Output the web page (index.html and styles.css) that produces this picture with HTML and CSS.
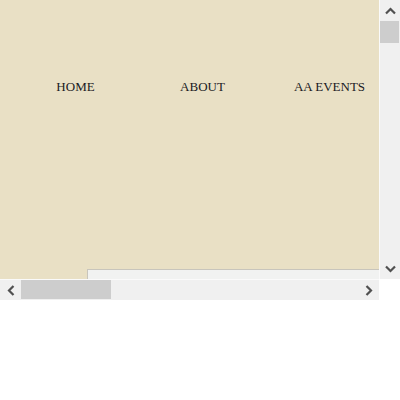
FILE: index.html
```html
<!DOCTYPE html>
<html>
<head>
<meta charset="utf-8">
<link rel="stylesheet" href="styles.css">
</head>
<body>
<div class="frame">
  <div class="viewport">
    <div class="page">
      <header class="header">
        <nav class="nav">
          <a class="nav-item">HOME</a>
          <a class="nav-item">ABOUT</a>
          <a class="nav-item">AA EVENTS</a>
        </nav>
      </header>
      <div class="body-row">
        <div class="side"></div>
        <main class="main"></main>
      </div>
    </div>
  </div>
  <div class="vbar">
    <div class="btn">
      <svg width="11" height="8" viewBox="0 0 11 8"><path d="M1 6.5 L5.5 2 L10 6.5" fill="none" stroke="#505050" stroke-width="2.2"/></svg>
    </div>
    <div class="vthumb"></div>
    <div class="spacer"></div>
    <div class="btn">
      <svg width="11" height="8" viewBox="0 0 11 8"><path d="M1 1.5 L5.5 6 L10 1.5" fill="none" stroke="#505050" stroke-width="2.2"/></svg>
    </div>
  </div>
  <div class="hbar">
    <div class="btn">
      <svg width="8" height="11" viewBox="0 0 8 11"><path d="M6.5 1 L2 5.5 L6.5 10" fill="none" stroke="#505050" stroke-width="2.2"/></svg>
    </div>
    <div class="hthumb"></div>
    <div class="spacer"></div>
    <div class="btn">
      <svg width="8" height="11" viewBox="0 0 8 11"><path d="M1.5 1 L6 5.5 L1.5 10" fill="none" stroke="#505050" stroke-width="2.2"/></svg>
    </div>
  </div>
  <div class="corner"></div>
</div>
</body>
</html>
```

FILE: styles.css
```css
html, body {
  margin: 0;
  padding: 0;
  background: #ffffff;
}
.frame {
  width: 400px;
  height: 300px;
  display: grid;
  grid-template-columns: 379px 21px;
  grid-template-rows: 279px 21px;
}
.viewport {
  overflow: hidden;
  background: #e9e0c5;
}
.page {
  width: 1420px;
  background: #e9e0c5;
  font-family: "Liberation Serif", serif;
}
.header {
  height: 269px;
  padding-top: 79px;
  box-sizing: border-box;
}
.nav {
  display: flex;
  padding-left: 12px;
}
.nav-item {
  width: 127px;
  text-align: center;
  font-size: 13px;
  color: #1a1a24;
}
.body-row {
  display: flex;
}
.side {
  width: 87px;
  flex: none;
}
.main {
  flex: 1;
  height: 600px;
  background: #f1f2f1;
  border-top: 1px solid #c8c5bc;
  border-left: 1px solid #c8c5bc;
}
.vbar {
  display: flex;
  flex-direction: column;
  background: #f0f0f0;
  border-left: 1px solid #fafafa;
}
.hbar {
  display: flex;
  background: #f0f0f0;
  border-top: 1px solid #fafafa;
}
.btn {
  flex: none;
  display: flex;
  align-items: center;
  justify-content: center;
}
.vbar .btn {
  height: 21px;
}
.hbar .btn {
  width: 21px;
}
.vthumb {
  height: 22px;
  background: #cdcdcd;
  margin-right: 1px;
}
.hthumb {
  width: 90px;
  background: #cdcdcd;
  margin-bottom: 1px;
}
.spacer {
  flex: 1;
}
.corner {
  background: #ffffff;
}
```
